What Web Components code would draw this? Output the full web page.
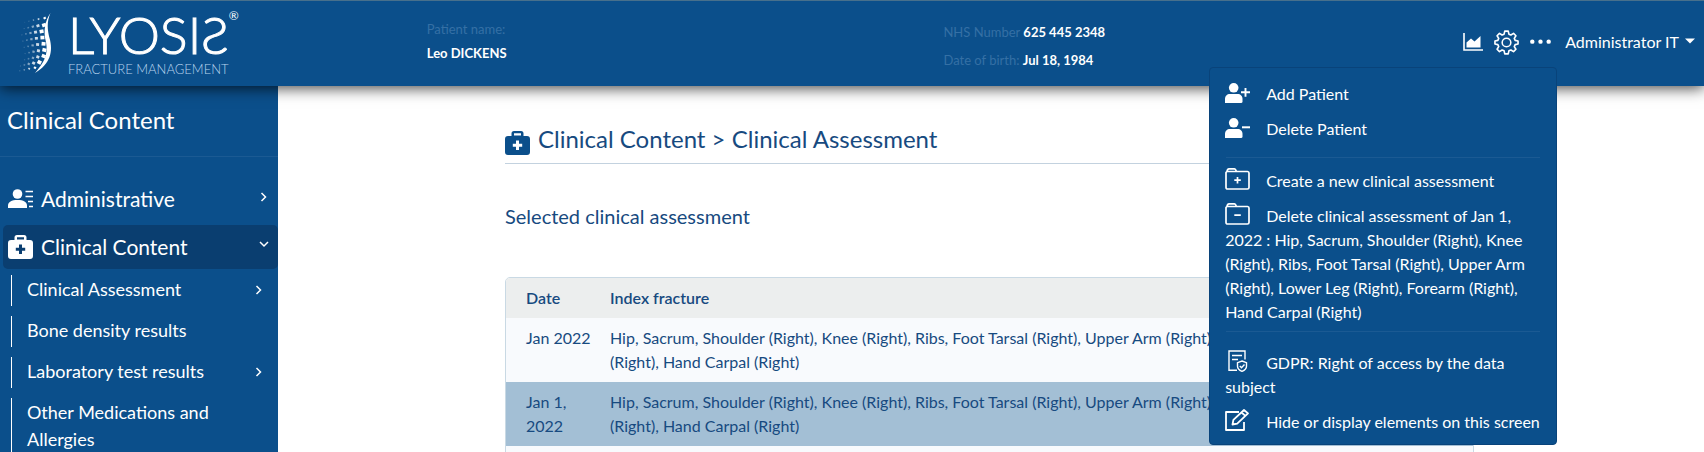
<!DOCTYPE html>
<html lang="en">
<head>
<meta charset="utf-8">
<title>Lyosis - Clinical Assessment</title>
<style>
html, body { height: 100%; }
body { margin: 0; font: 16px/24px Lato, "Open Sans", sans-serif; color: #174a80; background: #fff; overflow: hidden; }
</style>
</head>
<body>
<lyosis-app></lyosis-app>

<script>
const ICONS = {
  card: ['0 0 25 20', '<g fill="currentColor"><circle cx="9.5" cy="5" r="4.8"/><path d="M0 19v-2.500C0 13 3.500 11 9.500 11S19 13 19 16.500V19z"/></g><path d="M17.500 2.500H25M17.500 7.500H25M20 12.500h5M21 17.500h4" stroke="currentColor" stroke-width="1.300"/>'],
  medkit: ['0 0 25 24', '<path fill="currentColor" fill-rule="evenodd" d="M9 0h7a2.500 2.500 0 0 1 2.500 2.500V5H22a3 3 0 0 1 3 3v13a3 3 0 0 1-3 3H3a3 3 0 0 1-3-3V8a3 3 0 0 1 3-3h3.500V2.500A2.500 2.500 0 0 1 9 0zM9 2.300V4.500h7V2.300zM11 9.500v3.200H7.800v3.100H11V19h3v-3.200h3.200v-3.100H14V9.500z"/>'],
  right: ['0 0 8 12', '<path d="M1.500 2L5.500 6l-4 4" fill="none" stroke="currentColor" stroke-width="1.500"/>'],
  down: ['0 0 12 8', '<path d="M2 1l4 4 4-4" fill="none" stroke="currentColor" stroke-width="1.500"/>'],
  chart: ['0 0 20 18', '<path d="M1 0v17h19" fill="none" stroke="currentColor" stroke-width="1.600"/><path d="M3.500 14.500V9.500L8 5.500l3.500 3L17.500 3v11.500z" fill="currentColor"/>'],
  gear: ['0 0 26 26', '<path fill="none" stroke="currentColor" stroke-width="1.700" stroke-linejoin="round" d="M11.200 1.200h3.600l.7 3.100 2.100.9 2.700-1.700 2.500 2.500-1.700 2.700.9 2.100 3 .7v3l-3 .7-.9 2.100 1.700 2.700-2.500 2.500-2.700-1.700-2.100.9-.7 3.100h-3.600l-.7-3.100-2.100-.9-2.700 1.700-2.500-2.500 1.700-2.700-.9-2.100-3-.7v-3l3-.7.900-2.100-1.700-2.700 2.500-2.500 2.700 1.700 2.100-.9z"/><circle cx="13" cy="13" r="4.500" fill="none" stroke="currentColor" stroke-width="1.600"/>'],
  dots: ['0 0 20 5', '<g fill="currentColor"><circle cx="2.200" cy="2.500" r="2.100"/><circle cx="10" cy="2.500" r="2.100"/><circle cx="17.800" cy="2.500" r="2.100"/></g>'],
  caret: ['0 0 10 6', '<path d="M0 .5h10L5 5.500z" fill="currentColor"/>'],
  userplus: ['0 0 25 20', '<g fill="currentColor"><circle cx="8.700" cy="4.800" r="4.800"/><path d="M0 20v-4c0-3 2-5 5-5h7.500c3 0 5 2 5 5v2.500a1.500 1.500 0 0 1-1.500 1.500z"/></g><path d="M16 9.300h9M20.500 5v8.700" stroke="currentColor" stroke-width="1.900"/>'],
  userminus: ['0 0 25 20', '<g fill="currentColor"><circle cx="8.700" cy="4.800" r="4.800"/><path d="M0 20v-4c0-3 2-5 5-5h7.500c3 0 5 2 5 5v2.500a1.500 1.500 0 0 1-1.500 1.500z"/></g><path d="M17 9.300h8" stroke="currentColor" stroke-width="2"/>'],
  folderplus: ['0 0 25 22', '<path fill="none" stroke="currentColor" stroke-width="1.700" d="M1 4.500A1.500 1.500 0 0 1 2.500 3.500h20A1.600 1.600 0 0 1 24 5.100v14.300a1.600 1.600 0 0 1-1.600 1.600H2.600A1.600 1.600 0 0 1 1 19.400zM2 3.500Q2.500.9 4 .9h5.500q1 0 2 2.600M12.500 9v6.500M9.300 12.200h6.500"/>'],
  folderminus: ['0 0 25 22', '<path fill="none" stroke="currentColor" stroke-width="1.700" d="M1 4.500A1.500 1.500 0 0 1 2.500 3.500h20A1.600 1.600 0 0 1 24 5.100v14.300a1.600 1.600 0 0 1-1.600 1.600H2.600A1.600 1.600 0 0 1 1 19.400zM2 3.500Q2.500.9 4 .9h5.500q1 0 2 2.600M9.300 12.200h6.500"/>'],
  gdpr: ['0 0 25 22', '<path fill="none" stroke="currentColor" stroke-width="1.400" d="M12 20.300H4V1h16v8.500M7 5.500h10M7 9.500h6M17 11l4.500 1.700v3.500q0 3.300-4.500 5.100-4.500-1.800-4.500-5.100v-3.500zM14.800 16l1.700 1.700 3-3.200"/>'],
  edit: ['0 0 25 22', '<path fill="none" stroke="currentColor" stroke-width="1.800" stroke-linejoin="round" d="M14 3H1v18h18v-8M7.500 15.500l.9-4.600L19 1l4 3.400-10.800 10.300zM16.500 3.500l3.900 3.400"/>']
};

const BASE = `<style>
  *, *::before { box-sizing: border-box; }
  a { color: inherit; text-decoration: none; }
  button { font: inherit; color: inherit; background: none; border: 0; padding: 0; cursor: pointer; }
</style>`;

function element(name, html, setup) {
  customElements.define(name, class extends HTMLElement {
    connectedCallback() {
      if (this.shadowRoot) return;
      this.attachShadow({ mode: 'open' }).innerHTML = BASE + html;
      if (setup) setup(this, this.shadowRoot);
    }
  });
}

element('app-icon', `<style>
  :host { display: inline-block; width: 25px; line-height: 0; flex: none; }
  svg { display: block; width: 100%; height: auto; }
</style>`, (host, root) => {
  const [box, body] = ICONS[host.getAttribute('name')];
  root.innerHTML += `<svg viewBox="${box}" aria-hidden="true">${body}</svg>`;
});

element('app-logo', `<style>
  :host { display: block; color: #fff; }
  a { display: flex; gap: 14px; align-items: flex-start; }
  svg { width: 36px; height: 61px; margin-top: 3px; }
  .words { display: flex; flex-direction: column; gap: 3px; }
  .name { font-size: 52px; font-weight: 300; line-height: 48px; -webkit-text-stroke: 1px #fff; display: flex; align-items: flex-start; }
  sup { font-size: 12px; line-height: 12px; font-weight: 400; -webkit-text-stroke: 0; }
  .sub { font-size: 13px; font-weight: 300; line-height: 16px; color: #b8d4ee; }
</style>
<a href="#"><svg viewBox="0 0 36 61" aria-hidden="true"></svg>
<span class="words"><span class="name">LYOSIƧ<sup>®</sup></span><span class="sub">FRACTURE MANAGEMENT</span></span></a>`,
(host, root) => {
  /* spine: a tapered curve with columns of fading vertebra dots on its left */
  const cols = [[25, 4, 1], [19, 3, .8], [14, 2.300, .5], [9.500, 1.700, .3], [5.500, 1.200, .18]];
  let s = '<path fill="#fff" d="M32.500 0C28.500 9 29.500 17 31.500 25c4 14 .5 26-14.500 35C25.500 50 30.500 42 28 29 25 18 27 8 32.500 0z"/>';
  cols.forEach(([x, w, o], c) => {
    for (let i = 0; i < 9; i++) {
      const t = (i + .5) / 9, y = 1 + t * 56 + c * 1.200;
      const dx = Math.sin(t * 6.300 + 3.500) * 2 + (t < .2 ? 2.500 : 0) - (t > .7 ? (t - .7) * 30 : 0);
      const k = w * (t < .15 || t > .9 ? .6 : 1);
      s += `<rect x="${x + dx - k / 2}" y="${y}" width="${k}" height="${k * .9}" fill="#fff" opacity="${o}" transform="rotate(${-30 + t * 70} ${x + dx} ${y})"/>`;
    }
  });
  root.querySelector('svg').innerHTML = s;
});

element('patient-field', `<style>
  :host { display: block; font-size: 13px; line-height: 24px; }
  span { color: #3570a5; } b { color: #fff; }
</style><span><slot name="label"></slot></span> <b><slot></slot></b>`);

element('app-header', `<style>
  :host { display: block; position: relative; z-index: 2; background: #0b4f8b; color: #fff; border-top: 1px solid #48708c; box-shadow: 0 2px 14px rgba(0,0,0,.75); }
  header { display: grid; grid-template-columns: 427fr 517fr 520fr auto; height: 85px; }
  app-logo { padding: 9px 0 0 18px; }
  .one { width: 90px; padding-top: 16px; }
  .two { padding-top: 19px; display: flex; flex-direction: column; gap: 4px; }
  .acts { display: flex; align-items: center; height: 82px; padding-right: 9px; }
  .acts > * { display: flex; align-items: center; }
  .chart { width: 20px; margin-right: 11px; } .gear { width: 26px; margin-right: 10px; }
  .more { position: relative; margin-right: 14px; } .dots { display: flex; height: 24px; align-items: center; }
  .dots app-icon { width: 21px; }
  .user { gap: 6px; } .user app-icon { width: 10px; margin-bottom: 3px; }
  app-menu { position: absolute; top: 37px; right: -6px; }
</style>
<header>
  <app-logo></app-logo>
  <patient-field class="one"><span slot="label">Patient name:</span>Leo DICKENS</patient-field>
  <div class="two">
    <patient-field><span slot="label">NHS Number</span>625 445 2348</patient-field>
    <patient-field><span slot="label">Date of birth:</span>Jul 18, 1984</patient-field>
  </div>
  <div class="acts">
    <button class="chart" aria-label="Statistics"><app-icon name="chart" style="width:20px"></app-icon></button>
    <button class="gear" aria-label="Settings"><app-icon name="gear"></app-icon></button>
    <div class="more"><button class="dots" aria-label="More"><app-icon name="dots"></app-icon></button><app-menu></app-menu></div>
    <button class="user">Administrator IT<app-icon name="caret"></app-icon></button>
  </div>
</header>`);

element('menu-item', `<style>
  :host { display: block; padding: 6px 12px 5px 15px; }
  a { display: block; }
  app-icon { margin: -4px 16px -4px 0; vertical-align: 1px; }
</style><a href="#"><slot></slot></a>`, (host, root) => {
  root.querySelector('a').insertAdjacentHTML('afterbegin', `<app-icon name="${host.getAttribute('icon')}"></app-icon>`);
});

element('app-menu', `<style>
  :host { display: block; box-sizing: border-box; width: 348px; background: #0b4f8b; color: #fff; border: 1px solid #09437a; border-radius: 4px; padding: 8px 0 5px; }
  hr { border: 0; border-top: 1px solid #1b5a93; margin: 11px 16px 5px; }
  hr.near { margin: 2px 16px 13px; }
</style>
<menu-item icon="userplus">Add Patient</menu-item>
<menu-item icon="userminus">Delete Patient</menu-item>
<hr>
<menu-item icon="folderplus">Create a new clinical assessment</menu-item>
<menu-item icon="folderminus">Delete clinical assessment of Jan 1, 2022 : Hip, Sacrum, Shoulder (Right), Knee (Right), Ribs, Foot Tarsal (Right), Upper Arm (Right), Lower Leg (Right), Forearm (Right), Hand Carpal (Right)</menu-item>
<hr class="near">
<menu-item icon="gdpr">GDPR: Right of access by the data subject</menu-item>
<menu-item icon="edit">Hide or display elements on this screen</menu-item>`);

element('nav-group', `<style>
  :host { display: block; margin-left: 3px; border-radius: 5px; }
  :host([active]) { background: #0a3e70; }
  a { display: flex; align-items: center; gap: 8px; height: 44px; padding: 0 8px 0 5px; font-size: 21px; line-height: 28px; }
  span { flex: 1; }
</style><a href="#"><span><slot></slot></span></a>`, (host, root) => {
  const a = root.querySelector('a');
  a.insertAdjacentHTML('afterbegin', `<app-icon name="${host.getAttribute('icon')}"></app-icon>`);
  const open = host.hasAttribute('active');
  a.insertAdjacentHTML('beforeend', `<app-icon name="${open ? 'down' : 'right'}" style="width:${open ? 12 : 8}px;margin:0 ${open ? 0 : 2}px 4px 0"></app-icon>`);
});

element('nav-link', `<style>
  :host { display: block; margin: 0 15px 10px 11px; border-left: 1px solid #fff; }
  a { display: flex; align-items: center; padding: 1px 0 3px 15px; font-size: 18px; line-height: 27px; }
  span { flex: 1; }
</style><a href="#"><span><slot></slot></span></a>`, (host, root) => {
  if (host.hasAttribute('more'))
    root.querySelector('a').insertAdjacentHTML('beforeend', '<app-icon name="right" style="width:8px"></app-icon>');
});

element('side-nav', `<style>
  :host { display: block; background: #0b4f8b; color: #fff; overflow: hidden; }
  h2 { margin: 0; padding: 18px 7px 21px; font-size: 24px; font-weight: 400; line-height: 31px; border-bottom: 1px solid #1b5a93; }
  .top { padding: 20px 0 6px; display: grid; gap: 4px; }
</style>
<h2>Clinical Content</h2>
<nav>
  <div class="top"><nav-group icon="card">Administrative</nav-group>
  <nav-group icon="medkit" active>Clinical Content</nav-group></div>
  <nav-link more>Clinical Assessment</nav-link>
  <nav-link>Bone density results</nav-link>
  <nav-link more>Laboratory test results</nav-link>
  <nav-link>Other Medications and Allergies</nav-link>
</nav>`);

element('assessment-page', `<style>
  :host { display: grid; grid-template-columns: 227fr 969fr 230fr; align-content: start; overflow: hidden; background: #fff; }
  main { grid-column: 2; padding-top: 35px; min-width: 0; }
  h1 { display: flex; gap: 8px; margin: 0; height: 43px; font-size: 24px; font-weight: 400; line-height: 36px; border-bottom: 1px solid #c3d2df; }
  h1 app-icon { color: #0b4f8b; margin-top: 10px; }
  h2 { margin: 38px 0 47px; font-size: 20px; font-weight: 400; line-height: 28px; }
  .frame { border: 1px solid #c9d9e4; border-radius: 5px; overflow: hidden; }
  table { width: 100%; border-collapse: collapse; table-layout: fixed; }
  col.date { width: 94px; }
  th, td { text-align: left; vertical-align: top; padding: 8px 60px 8px 10px; }
  th:first-child, td:first-child { padding: 8px 9px 8px 20px; }
  th { font-weight: 600; background: #eceeee; }
  td { background: #f8fafd; }
  tr.selected td { background: #a3bfd5; }
  .when { white-space: nowrap; }
</style>
<main>
  <h1><app-icon name="medkit"></app-icon>Clinical Content &gt; Clinical Assessment</h1>
  <h2>Selected clinical assessment</h2>
  <div class="frame"><table>
    <colgroup><col class="date"><col></colgroup>
    <thead><tr><th>Date</th><th>Index fracture</th></tr></thead>
    <tbody>
      <tr><td class="when">Jan 2022</td><td>Hip, Sacrum, Shoulder (Right), Knee (Right), Ribs, Foot Tarsal (Right), Upper Arm (Right), Lower Leg (Right), Forearm (Right), Hand Carpal (Right)</td></tr>
      <tr class="selected"><td>Jan 1, 2022</td><td>Hip, Sacrum, Shoulder (Right), Knee (Right), Ribs, Foot Tarsal (Right), Upper Arm (Right), Lower Leg (Right), Forearm (Right), Hand Carpal (Right)</td></tr>
      <tr><td>&nbsp;</td><td></td></tr>
    </tbody>
  </table></div>
</main>`);

element('lyosis-app', `<style>
  :host { display: grid; grid-template: auto 1fr / 278px 1fr; height: 100vh; overflow: hidden; }
  app-header { grid-column: 1 / -1; }
  side-nav, assessment-page { min-height: 0; }
</style>
<app-header></app-header><side-nav></side-nav><assessment-page></assessment-page>`);
</script>
</body>
</html>
